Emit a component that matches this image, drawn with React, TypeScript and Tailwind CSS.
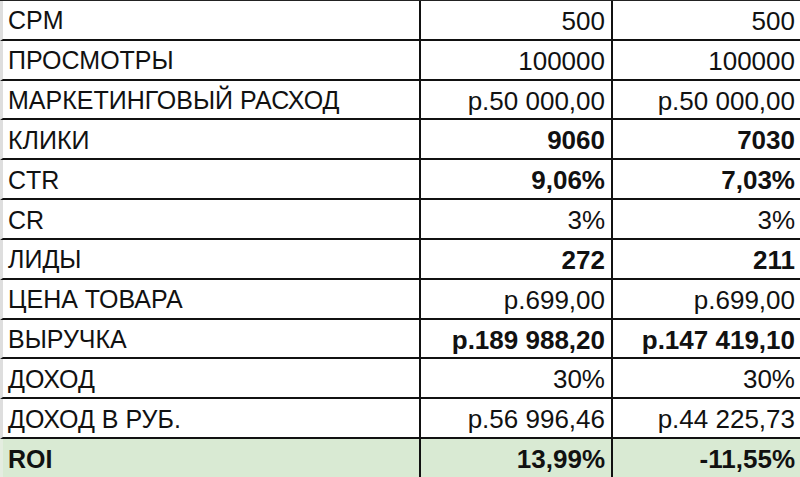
const rows: { label: string; a: string; b: string; bold?: boolean }[] = [
  { label: 'CPM', a: '500', b: '500' },
  { label: 'ПРОСМОТРЫ', a: '100000', b: '100000' },
  { label: 'МАРКЕТИНГОВЫЙ РАСХОД', a: 'р.50 000,00', b: 'р.50 000,00' },
  { label: 'КЛИКИ', a: '9060', b: '7030', bold: true },
  { label: 'CTR', a: '9,06%', b: '7,03%', bold: true },
  { label: 'CR', a: '3%', b: '3%' },
  { label: 'ЛИДЫ', a: '272', b: '211', bold: true },
  { label: 'ЦЕНА ТОВАРА', a: 'р.699,00', b: 'р.699,00' },
  { label: 'ВЫРУЧКА', a: 'р.189 988,20', b: 'р.147 419,10', bold: true },
  { label: 'ДОХОД', a: '30%', b: '30%' },
  { label: 'ДОХОД В РУБ.', a: 'р.56 996,46', b: 'р.44 225,73' },
]

export default function App() {
  return (
    <div
      className="flex h-[477px] w-[800px] flex-col overflow-hidden border-t border-[#222] bg-white text-[25px] leading-none text-[#111]"
      style={{ fontFamily: '"Liberation Sans", Arial, sans-serif' }}
    >
      {rows.map((row) => (
        <div
          key={row.label}
          className="grid min-h-0 flex-1 grid-cols-[418px_192px_1fr] border-b-2 border-[#111] border-l-[3px] border-l-[#dedede]"
        >
          <div className="flex items-center border-r-2 border-[#111] pl-[5px] pt-[2px]">
            {row.label}
          </div>
          <div
            className={`flex items-center justify-end border-r-2 border-[#111] pr-[6px] pt-[2px] text-[26px] ${row.bold ? 'font-bold' : ''}`}
          >
            {row.a}
          </div>
          <div
            className={`flex items-center justify-end pr-[5px] pt-[2px] text-[26px] ${row.bold ? 'font-bold' : ''}`}
          >
            {row.b}
          </div>
        </div>
      ))}
      <div className="grid min-h-0 flex-1 grid-cols-[418px_192px_1fr] border-l-[3px] border-l-[#e4ede0] bg-[#d9ead3] font-bold">
        <div className="flex items-center border-r-2 border-[#111] pl-[5px] pt-[2px]">
          ROI
        </div>
        <div className="flex items-center justify-end border-r-2 border-[#111] pr-[6px] pt-[2px] text-[26px]">
          13,99%
        </div>
        <div className="flex items-center justify-end pr-[5px] pt-[2px] text-[26px]">
          -11,55%
        </div>
      </div>
    </div>
  )
}
